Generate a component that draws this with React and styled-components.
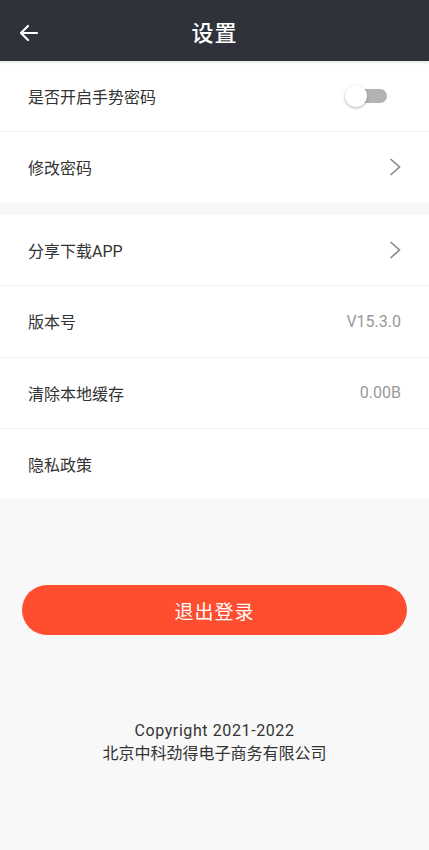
import React from 'react';
import styled, { createGlobalStyle } from 'styled-components';

const GlobalStyle = createGlobalStyle`
  html, body {
    margin: 0;
    padding: 0;
    background: #f8f8f8;
    font-family: Roboto, "Noto Sans", "Noto Sans CJK SC", sans-serif;
  }
`;

const Page = styled.div`
  width: 429px;
  min-height: 850px;
  background: #f8f8f8;
  display: flex;
  flex-direction: column;
`;

const Header = styled.div`
  height: 61px;
  background: #2f323a;
  display: flex;
  align-items: center;
  justify-content: center;
  position: relative;
  box-shadow: 0 1px 3px rgba(0, 0, 0, 0.15);
`;

const BackButton = styled.div`
  position: absolute;
  left: 18px;
  top: 22px;
  width: 22px;
  height: 22px;
`;

const Title = styled.h1`
  margin: 0;
  color: #fff;
  font-size: 22px;
  font-weight: 500;
  letter-spacing: 1px;
`;

const Group = styled.div`
  background: #fff;
  margin-bottom: ${p => p.gap || 0}px;
`;

const Row = styled.div`
  height: ${p => p.h || 70}px;
  display: flex;
  align-items: center;
  justify-content: space-between;
  padding: 0 28px 0 28px;
  border-bottom: ${p => (p.last ? 'none' : '1px solid #f0f0f0')};
`;

const Label = styled.span`
  font-size: 16px;
  color: #333;
`;

const Value = styled.span`
  font-size: 16px;
  color: #999;
`;

const Toggle = styled.div`
  position: relative;
  width: 42px;
  height: 22px;
  margin-right: 14px;
`;

const Track = styled.div`
  position: absolute;
  left: 12px;
  right: 0;
  top: 4px;
  height: 14px;
  border-radius: 7px;
  background: #b3b3b3;
`;

const Knob = styled.div`
  position: absolute;
  left: 0;
  top: 0;
  width: 22px;
  height: 22px;
  border-radius: 50%;
  background: #fff;
  box-shadow: 0 1px 3px rgba(0, 0, 0, 0.3);
`;

const Chevron = () => (
  <svg width="12" height="20" viewBox="0 0 12 20">
    <path d="M1.5 2 L10.5 10 L1.5 18" fill="none" stroke="#888" strokeWidth="1.6" />
  </svg>
);

const LogoutButton = styled.button`
  margin: 86px 22px 0 22px;
  height: 50px;
  border: none;
  border-radius: 25px;
  background: #ff4d2f;
  color: #fff;
  font-size: 19px;
  font-family: inherit;
  letter-spacing: 1px;
`;

const Footer = styled.div`
  margin-top: 84px;
  text-align: center;
  color: #333;
  font-size: 16px;
  line-height: 23px;
`;

const Copyright = styled.span`
  letter-spacing: 0.6px;
`;

export default function App() {
  return (
    <Page>
      <GlobalStyle />
      <Header>
        <BackButton>
          <svg width="22" height="22" viewBox="0 0 22 22">
            <path d="M19 11 H4 M10 4 L3 11 L10 18" fill="none" stroke="#fff" strokeWidth="2.2" strokeLinecap="round" strokeLinejoin="round" />
          </svg>
        </BackButton>
        <Title>设置</Title>
      </Header>
      <Group gap={13}>
        <Row>
          <Label>是否开启手势密码</Label>
          <Toggle>
            <Track />
            <Knob />
          </Toggle>
        </Row>
        <Row last>
          <Label>修改密码</Label>
          <Chevron />
        </Row>
      </Group>
      <Group>
        <Row h={70.3}>
          <Label>分享下载APP</Label>
          <Chevron />
        </Row>
        <Row h={70.3}>
          <Label>版本号</Label>
          <Value>V15.3.0</Value>
        </Row>
        <Row h={70.3}>
          <Label>清除本地缓存</Label>
          <Value>0.00B</Value>
        </Row>
        <Row h={70.3} last>
          <Label>隐私政策</Label>
        </Row>
      </Group>
      <LogoutButton>退出登录</LogoutButton>
      <Footer>
        <Copyright>Copyright 2021-2022</Copyright>
        <br />
        北京中科劲得电子商务有限公司
      </Footer>
    </Page>
  );
}
